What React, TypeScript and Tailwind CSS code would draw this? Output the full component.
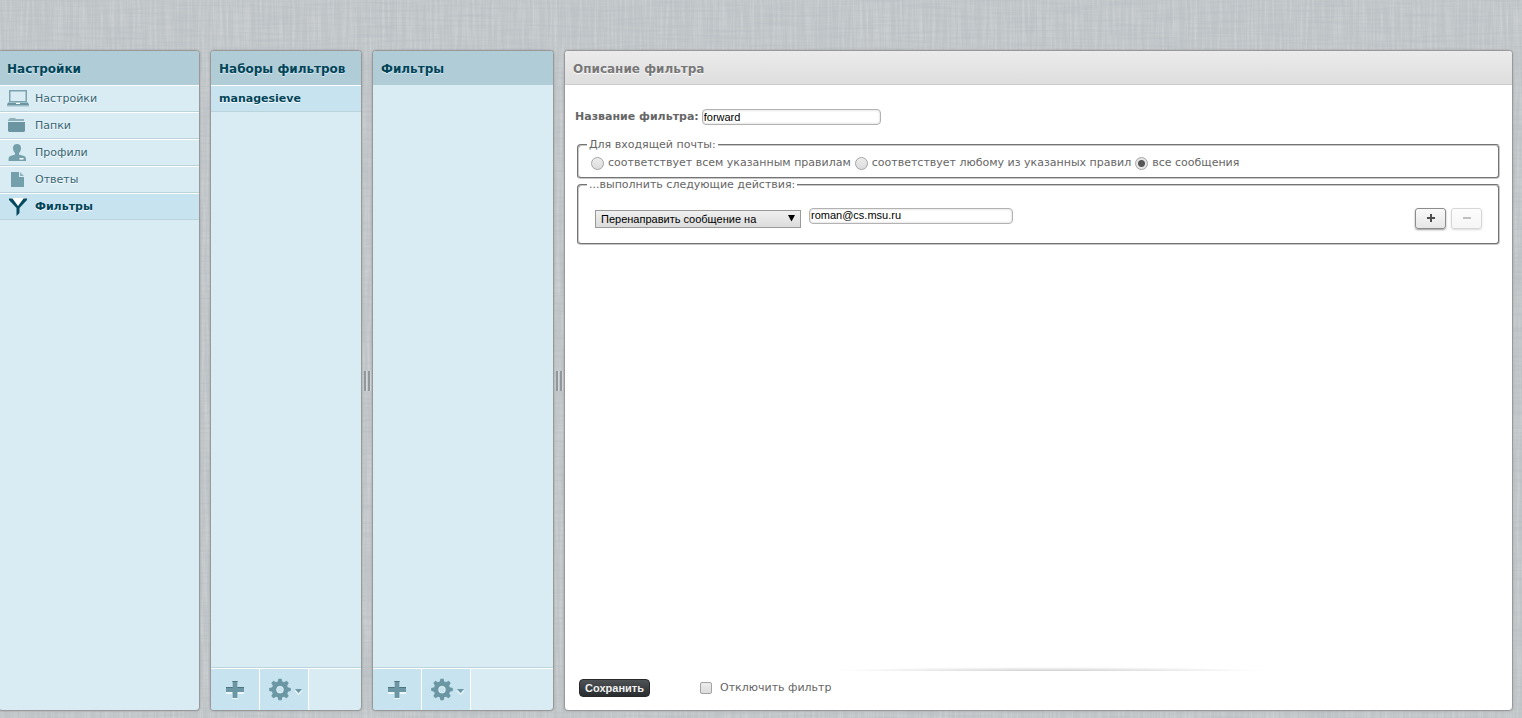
import { useState, type ReactNode } from "react";
import clsx from "clsx";

function LaptopIcon() {
  return (
    <svg width="22" height="18" viewBox="0 0 22 18" aria-hidden="true">
      <path fill="#7ba3ae" fillRule="evenodd" d="M2 0h18v12H2zM3.500 1.500v9.500h15V1.500z" />
      <path fill="#6b95a1" d="M1 12.500h20l1 2.500H0z" />
      <path fill="#9dbcc5" d="M0 15h22v1.500H0z" />
      <path fill="#fff" d="M9 13h4v1H9z" />
    </svg>
  );
}

function FolderIcon() {
  return (
    <svg width="22" height="18" viewBox="0 0 22 18" aria-hidden="true">
      <path fill="#8fb1bb" d="M2 2l1-1h5l1 1h8v2H1V3z" />
      <path fill="#6b95a1" d="M1 5h17v9l-1 1H2l-1-1z" />
    </svg>
  );
}

function PersonIcon() {
  return (
    <svg width="22" height="18" viewBox="0 0 22 18" aria-hidden="true">
      <path
        fill="#74a0ac"
        d="M10 0c2.500 0 4 1.500 4 4 0 2.500-1 4-2 5v1.500l5 1.500c1.500.5 2 1.500 2 4.500v.5H1.500v-.5c0-3 .5-4 2-4.500L8 10.500V9C7 8 6 6.500 6 4c0-2.500 1.500-4 4-4z"
      />
      <path fill="#fff" d="M12.500 14h4v1.500h-4z" />
    </svg>
  );
}

function PageIcon() {
  return (
    <svg width="22" height="18" viewBox="0 0 22 18" aria-hidden="true">
      <path fill="#74a0ac" d="M4 1h8v5h5v10H4z" />
      <path fill="#8fb3bd" d="M13 1l4 4h-4z" />
    </svg>
  );
}

function FunnelIcon() {
  return (
    <svg width="22" height="18" viewBox="0 0 22 18" aria-hidden="true">
      <path fill="#fff" d="M4 0h14l-7 9z" />
      <path fill="#074a5f" d="M2 0.500h3.500l5.500 7.500 5.500-7.500H20v1.500l-7.500 8V15L9.500 18v-8L2 2z" />
    </svg>
  );
}

function PlusIcon() {
  return (
    <svg width="18" height="20" viewBox="0 0 18 20" aria-hidden="true">
      <path fill="#fff" d="M6 2h6v6h6v6h-6v5H6v-5H0V8h6z" opacity=".7" />
      <path fill="#6b97a4" d="M6.500 1h5v6H18v5h-6.500v6h-5v-6H0V7h6.500z" />
      <path fill="#4b7380" d="M6.500 1h5v1h-5zM0 7h6.500v1H0zM11.500 7H18v1h-6.500z" />
    </svg>
  );
}

const TEETH = [0, 45, 90, 135, 180, 225, 270, 315];

function GearIcon() {
  return (
    <svg width="34" height="24" viewBox="0 0 34 24" aria-hidden="true">
      <g fill="#6b97a4">
        <circle cx="11" cy="11.500" r="8.300" />
        {TEETH.map((a) => (
          <path key={a} d="M8.400 5l1-4.300h3.200l1 4.300z" transform={`rotate(${a} 11 11.500)`} />
        ))}
      </g>
      <circle cx="11" cy="11.700" r="3.400" fill="#c7e3ef" stroke="#fff" strokeWidth=".6" />
      <path fill="none" stroke="#fff" d="M26 12.500l3.500 4 3.500-4" />
      <path fill="#6b97a4" d="M26 11h7l-3.500 4z" />
    </svg>
  );
}

function Panel({ title, className, children }: { title: string; className: string; children?: ReactNode }) {
  return (
    <section
      className={clsx(
        "flex shrink-0 flex-col overflow-hidden rounded-[4px] border border-[#999] bg-[#d9ecf4] shadow-[0_0_2px_#999]",
        className
      )}
    >
      <h2 className="h-[34px] bg-[#b0ccd7] px-2 text-xs leading-[36px] font-bold whitespace-nowrap text-[#004458] [text-shadow:0_1px_1px_#d9ecf4]">
        {title}
      </h2>
      {children}
    </section>
  );
}

function PanelFooter() {
  const button =
    "flex h-[41px] w-[49px] items-center justify-center border-r border-white bg-[#c7e3ef] pt-px";
  return (
    <div className="mt-auto border-t border-[#bbd3da]">
      <div className="flex border-t border-white">
        <button type="button" aria-label="Добавить" className={button}>
          <PlusIcon />
        </button>
        <button type="button" aria-label="Действия" className={clsx(button, "pl-1")}>
          <GearIcon />
        </button>
      </div>
    </div>
  );
}

function Splitter() {
  return (
    <div className="flex w-[10px] shrink-0 items-center justify-center gap-px">
      <span className="h-5 w-[3px] border-r border-[#d5d9db] bg-[#8f979c]" />
      <span className="h-5 w-[3px] border-r border-[#d5d9db] bg-[#8f979c]" />
    </div>
  );
}

// woven linen behind the panels
function Linen() {
  return (
    <svg className="pointer-events-none absolute inset-0 size-full opacity-40" aria-hidden="true">
      <filter id="warp" x="0" y="0" width="100%" height="100%">
        <feTurbulence type="fractalNoise" baseFrequency="0.4 0.02" numOctaves="2" seed="3" />
        <feColorMatrix values="0 0 0 0 1  0 0 0 0 1  0 0 0 0 1  1.100 0 0 0 -0.400" />
      </filter>
      <filter id="weft" x="0" y="0" width="100%" height="100%">
        <feTurbulence type="fractalNoise" baseFrequency="0.02 0.4" numOctaves="2" seed="8" />
        <feColorMatrix values="0 0 0 0 0.350  0 0 0 0 0.400  0 0 0 0 0.440  1 0 0 0 -0.400" />
      </filter>
      <rect width="100%" height="100%" filter="url(#warp)" />
      <rect width="100%" height="100%" filter="url(#weft)" />
    </svg>
  );
}

const SECTIONS = [
  { label: "Настройки", icon: <LaptopIcon /> },
  { label: "Папки", icon: <FolderIcon /> },
  { label: "Профили", icon: <PersonIcon /> },
  { label: "Ответы", icon: <PageIcon /> },
  { label: "Фильтры", icon: <FunnelIcon /> },
];

const ROW = "flex h-[27px] items-center border-t border-b border-t-white border-b-[#bbd3da] pt-px leading-[26px]";

const RULES = [
  { value: "allof", label: "соответствует всем указанным правилам" },
  { value: "anyof", label: "соответствует любому из указанных правил" },
  { value: "any", label: "все сообщения" },
];

const INPUT =
  "h-4 rounded-[4px] border border-[#b2b2b2] bg-white px-px font-['Liberation_Sans',sans-serif] text-[11px] text-black shadow-[inset_0_0_2px_1px_#e8e8e8] outline-none";
const FIELDSET = "rounded-[4px] border-2 border-[#c8c8c8] px-2 [border-style:groove]";
const SMALL_BUTTON =
  "flex h-[21px] w-[31px] items-center justify-center rounded-[3px] border border-[#8c8c8c] bg-linear-to-b from-[#f9f9f9] to-[#e6e6e6] shadow-[0_1px_2px_#999]";

export default function App() {
  const [name, setName] = useState("forward");
  const [target, setTarget] = useState("roman@cs.msu.ru");
  const [rule, setRule] = useState("any");
  const [disabled, setDisabled] = useState(false);

  return (
    <div className="relative isolate min-h-screen bg-[#c0c5c8] font-['DejaVu_Sans',sans-serif] text-[11px] text-[#666]">
      <Linen />
      <div className="relative flex min-h-screen pt-[50px] pr-[9px] pb-[7px]">
        <Panel title="Настройки" className="-ml-0.5 w-[202px]">
          <nav>
            {SECTIONS.map(({ label, icon }) => (
              <a
                key={label}
                href="#"
                className={clsx(
                  ROW,
                  "gap-[6px] pl-2 [text-shadow:0_1px_1px_#fff]",
                  label === "Фильтры" ? "bg-[#c7e3ef] font-bold text-[#004458]" : "text-[#376572]"
                )}
              >
                {icon}
                {label}
              </a>
            ))}
          </nav>
        </Panel>

        <div className="w-[10px] shrink-0" />

        <Panel title="Наборы фильтров" className="w-[152px]">
          <a href="#" className={clsx(ROW, "bg-[#c7e3ef] px-2 font-bold text-[#004458] [text-shadow:0_1px_1px_#fff]")}>
            managesieve
          </a>
          <PanelFooter />
        </Panel>

        <Splitter />

        <Panel title="Фильтры" className="w-[182px]">
          <PanelFooter />
        </Panel>

        <Splitter />

        <main className="flex min-w-0 flex-1 flex-col overflow-hidden rounded-[4px] border border-[#999] bg-white shadow-[0_0_2px_#999]">
          <h2 className="h-[34px] border-b border-[#ccc] bg-linear-to-b from-[#ebebeb] to-[#dedede] px-2 text-xs leading-[36px] font-bold text-[#777] [text-shadow:0_1px_1px_#fff]">
            Описание фильтра
          </h2>

          <form className="flex flex-1 flex-col" onSubmit={(e) => e.preventDefault()}>
            <div className="flex items-center gap-[3px] pt-6 pl-[10px]">
              <label htmlFor="filter-name" className="font-bold">
                Название фильтра:
              </label>
              <input
                id="filter-name"
                className={clsx(INPUT, "w-[179px]")}
                value={name}
                onChange={(e) => setName(e.target.value)}
              />
            </div>

            <div className="px-3 pt-[13px]">
              <fieldset className={FIELDSET}>
                <legend className="px-[2px] leading-3">Для входящей почты:</legend>
                <div className="flex h-[26px] items-center gap-1 pb-px pl-1">
                  {RULES.map(({ value, label }) => (
                    <label key={value} className="flex items-center gap-1 whitespace-nowrap">
                      <input
                        type="radio"
                        name="join"
                        value={value}
                        checked={rule === value}
                        onChange={() => setRule(value)}
                        className="size-[13px] appearance-none rounded-full border border-[#a3a3a3] bg-linear-to-b from-[#ededed] to-[#dcdcdc] checked:bg-[radial-gradient(circle,#555_0_3px,#e5e5e5_4px)]"
                      />
                      {label}
                    </label>
                  ))}
                </div>
              </fieldset>

              <fieldset className={FIELDSET}>
                <legend className="px-[2px] leading-3">...выполнить следующие действия:</legend>
                <div className="flex items-start pt-[17px] pr-2 pb-[14px] pl-2">
                  <div className="relative mt-[2px]">
                    <select
                      aria-label="Действие"
                      className="block h-[18px] w-[206px] appearance-none border border-[#999] bg-linear-to-b from-[#f0f0f0] to-[#dcdcdc] px-[5px] font-['Liberation_Sans',sans-serif] text-[11px] text-black"
                    >
                      <option>Перенаправить сообщение на</option>
                    </select>
                    <svg
                      className="pointer-events-none absolute top-[5px] right-[6px]"
                      width="7"
                      height="7"
                      viewBox="0 0 7 7"
                      aria-hidden="true"
                    >
                      <path d="M0 0h7L3.500 6.500z" />
                    </svg>
                  </div>
                  <input
                    aria-label="Адрес"
                    className={clsx(INPUT, "ml-2 w-[204px]")}
                    value={target}
                    onChange={(e) => setTarget(e.target.value)}
                  />
                  <div className="ml-auto flex gap-[5px]">
                    <button type="button" aria-label="Добавить действие" className={SMALL_BUTTON}>
                      <svg width="8" height="8" viewBox="0 0 8 8" aria-hidden="true">
                        <path fill="#4d4d4d" d="M3 0h2v3h3v2H5v3H3V5H0V3h3z" />
                      </svg>
                    </button>
                    <button
                      type="button"
                      disabled
                      aria-label="Удалить действие"
                      className={clsx(SMALL_BUTTON, "opacity-35")}
                    >
                      <svg width="8" height="8" viewBox="0 0 8 8" aria-hidden="true">
                        <path fill="#4d4d4d" d="M0 3h8v2H0z" />
                      </svg>
                    </button>
                  </div>
                </div>
              </fieldset>
            </div>

            <div className="mt-auto">
              <div className="flex justify-center pl-6">
                <div className="h-1 w-[440px] bg-[radial-gradient(ellipse_at_bottom,#cfcfcf,transparent_70%)]" />
              </div>
              <div className="flex items-center px-[14px] pt-2 pb-[13px]">
                <button
                  type="submit"
                  className="h-[18px] w-[71px] rounded-[4px] border border-[#26282a] bg-linear-to-b from-[#505355] to-[#2a2d2f] font-['Liberation_Sans',sans-serif] text-[11px] leading-4 font-bold whitespace-nowrap text-[#f0f0f0]"
                >
                  Сохранить
                </button>
                <label className="ml-[50px] flex items-center gap-2">
                  <input
                    type="checkbox"
                    checked={disabled}
                    onChange={(e) => setDisabled(e.target.checked)}
                    className="size-3 appearance-none rounded-[2px] border border-[#a3a3a3] bg-linear-to-b from-[#ededed] to-[#dcdcdc] checked:bg-[#555]"
                  />
                  Отключить фильтр
                </label>
              </div>
            </div>
          </form>
        </main>
      </div>
    </div>
  );
}
